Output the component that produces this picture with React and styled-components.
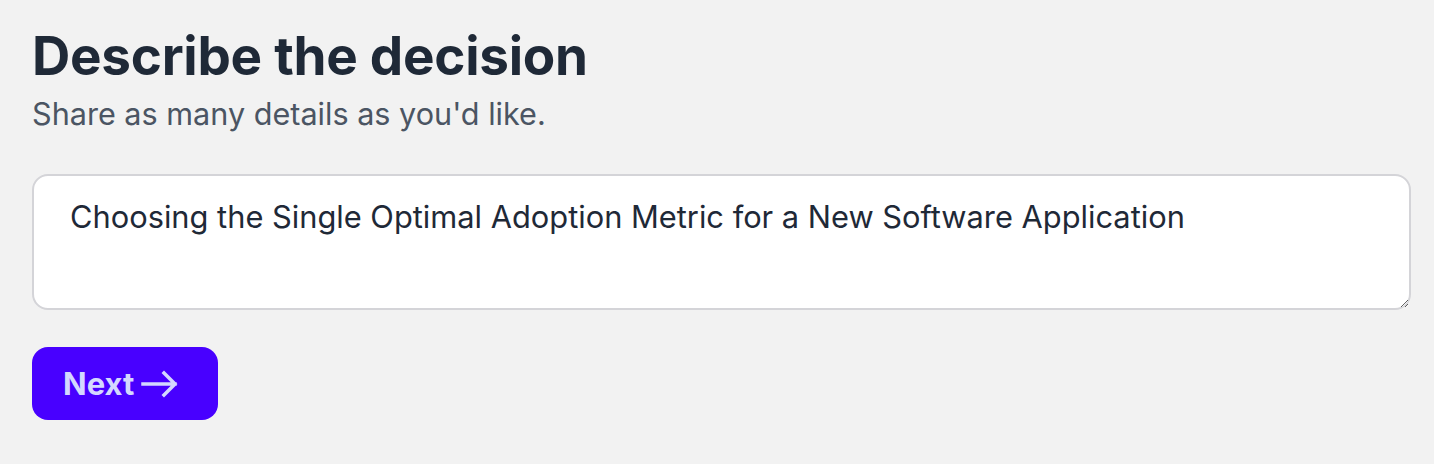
import React, { useState } from "react";
import styled, { createGlobalStyle } from "styled-components";

const GlobalStyle = createGlobalStyle`
  html, body {
    margin: 0;
    background: #f2f2f2;
  }
  body {
    font-family: Inter, "Noto Sans", sans-serif;
    color: #1f2937;
  }
`;

const Page = styled.main`
  padding: 24px 23px 40px 32px;
`;

const Title = styled.h1`
  margin: 0;
  font-size: 53px;
  line-height: 64px;
  font-weight: 700;
  letter-spacing: -0.005em;
  color: #1f2937;
`;

const Subtitle = styled.p`
  margin: 6px 0 0;
  font-size: 30.6px;
  line-height: 40px;
  color: #4b5563;
`;

const TextArea = styled.textarea`
  display: block;
  box-sizing: border-box;
  width: 100%;
  height: 136px;
  margin-top: 40px;
  padding: 21px 36px;
  border: 2px solid #d4d4d8;
  border-radius: 16px;
  background: #fff;
  font-family: Inter, "Noto Sans", sans-serif;
  font-size: 30.8px;
  line-height: 40px;
  color: #1f2937;
  resize: vertical;
  outline: none;
`;

const Button = styled.button`
  display: inline-flex;
  align-items: center;
  gap: 7px;
  margin-top: 37px;
  height: 73px;
  padding: 0 39px 0 31px;
  border: 0;
  border-radius: 16px;
  background: #4800ff;
  color: #d4d8ff;
  font-family: Inter, "Noto Sans", sans-serif;
  font-size: 31px;
  font-weight: 700;
  cursor: pointer;
`;

function App() {
  const [text, setText] = useState(
    "Choosing the Single Optimal Adoption Metric for a New Software Application"
  );
  return (
    <>
      <GlobalStyle />
      <Page>
        <Title>Describe the decision</Title>
        <Subtitle>Share as many details as you'd like.</Subtitle>
        <TextArea value={text} onChange={(e) => setText(e.target.value)} />
        <Button type="button">
          Next
          <svg width="38" height="28" viewBox="0 0 38 28" fill="none" stroke="currentColor" strokeWidth="3.5" strokeLinecap="square">
            <path d="M2 14h32M23 3l11 11-11 11" />
          </svg>
        </Button>
      </Page>
    </>
  );
}

export default App;
